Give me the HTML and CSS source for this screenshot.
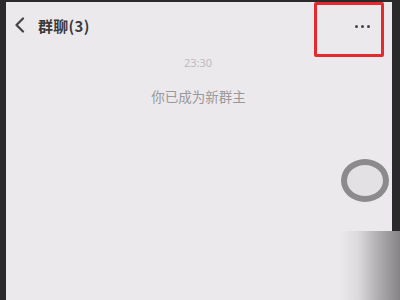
FILE: index.html
```html
<!DOCTYPE html>
<html lang="zh">
<head>
<meta charset="utf-8">
<link rel="stylesheet" href="styles.css">
</head>
<body>
<div class="frame">
  <div class="screen">
    <div class="titlebar">
      <svg class="back" width="12" height="16" viewBox="0 0 12 16"><path d="M9 1.5 L2.5 8 L9 14.5" fill="none" stroke="#444" stroke-width="2.2" stroke-linecap="round" stroke-linejoin="round"/></svg>
      <span class="title">群聊(3)</span>
      <span class="spacer"></span>
      <span class="dots"><i></i><i></i><i></i></span>
    </div>
    <div class="time">23:30</div>
    <div class="notice">你已成为新群主</div>
    <div class="fab-row"><span class="fab"></span></div>
  </div>
  <div class="highlight"></div>
  <div class="fade"></div>
</div>
</body>
</html>
```
FILE: styles.css
```css
html, body {
  margin: 0;
  padding: 0;
  background: #2a2a2a;
  width: 400px;
  height: 300px;
  overflow: hidden;
  font-family: "Noto Sans CJK SC", "Noto Sans", sans-serif;
}
.frame {
  position: relative;
  width: 400px;
  height: 300px;
  padding: 2px 8px 0 6px;
  box-sizing: border-box;
}
.screen {
  height: 298px;
  background: #ebe9eb;
  display: flex;
  flex-direction: column;
}
.titlebar {
  height: 46px;
  display: flex;
  align-items: center;
  padding: 0 22px 0 8px;
}
.back { display: block; margin-right: 12px; }
.title {
  font-size: 15px;
  font-weight: 700;
  color: #3a3a3a;
  letter-spacing: 0.3px;
}
.spacer { flex: 1; }
.dots { display: flex; gap: 3px; margin-top: 2px; }
.dots i {
  width: 3px; height: 3px; border-radius: 50%;
  background: #444; display: block;
}
.time {
  text-align: center;
  font-size: 11px;
  color: #bdbbbd;
  margin-top: 7px;
  padding-right: 2px;
  font-family: "Noto Sans", sans-serif;
}
.notice {
  text-align: center;
  font-size: 13.5px;
  color: #9a989a;
  margin-top: 16px;
  padding-right: 1px;
}
.fab-row {
  display: flex;
  justify-content: flex-end;
  padding-right: 3px;
  margin-top: 53px;
}
.fab {
  width: 36px; height: 31px;
  border: 6px solid #8c8a8c;
  border-radius: 50%;
  background: #e3e1e3;
  filter: blur(0.7px);
}
.highlight {
  position: absolute;
  left: 314px; top: 2px;
  width: 70px; height: 55px;
  border: 3px solid #e42a2e;
  border-radius: 2px;
  box-sizing: border-box;
}
.fade {
  position: absolute;
  left: 340px; top: 231px;
  width: 60px; height: 69px;
  background: linear-gradient(to right, rgba(235,233,235,0) 0%, #dcdadc 30%, #b4b2b4 60%, #858385 100%);
}
```
